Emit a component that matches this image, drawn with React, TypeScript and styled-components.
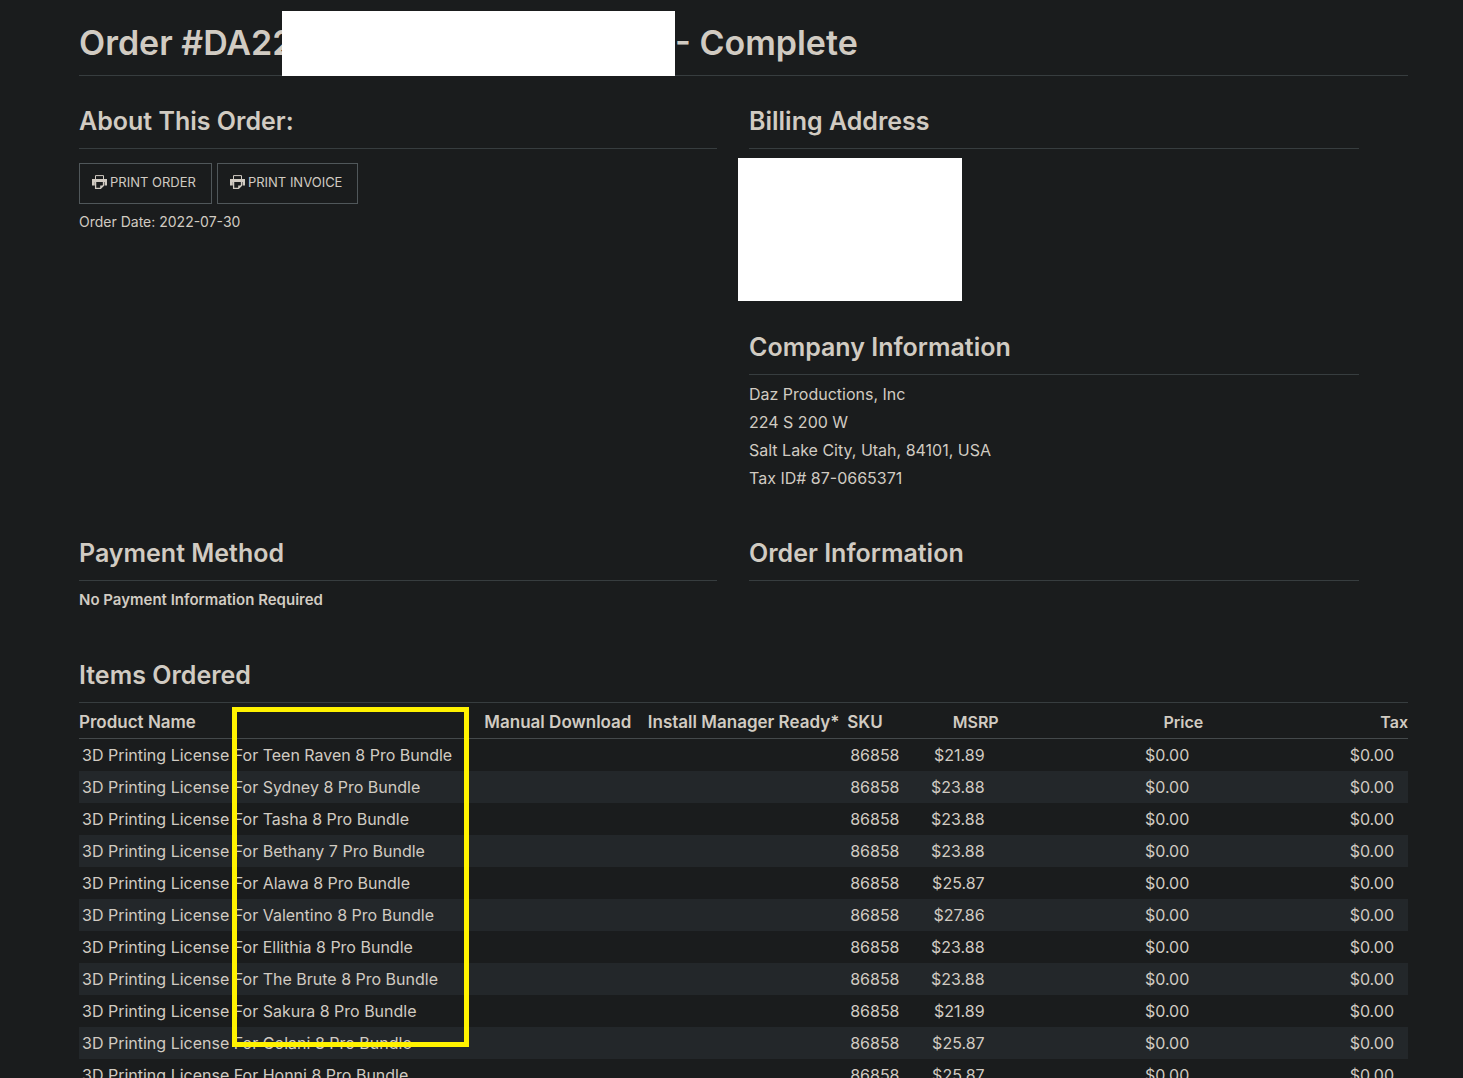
import React from "react";
import styled, { createGlobalStyle } from "styled-components";

const ink = "#d1cbc2";
const rule = "#373d3f";

const GlobalStyle = createGlobalStyle`
  *, *::before, *::after { box-sizing: border-box; }
  body {
    margin: 0;
    background: #1a1c1d;
    color: ${ink};
    font-family: Inter, "Open Sans", sans-serif;
    font-size: 16px;
    line-height: 28px;
  }
`;

const Page = styled.main`
  padding: 11px 55px 0 79px;
`;

const Title = styled.h1`
  display: grid;
  grid-template-columns: 203px 393px auto;
  height: 65px;
  margin: 0;
  border-bottom: 1px solid ${rule};
  font-size: 34px;
  font-weight: 600;
  line-height: 64px;
  white-space: nowrap;
`;

const Redacted = styled.span`
  position: relative;
  height: 65px;
  background: #fff;
`;

const Columns = styled.div`
  display: grid;
  grid-template-columns: 638fr 610fr;
  column-gap: 32px;
  padding-right: 49px;
`;

const Stack = styled.div`
  display: flex;
  flex-direction: column;
`;

const Section = styled.section<{ $space?: number }>`
  margin-top: ${(p) => p.$space ?? 40}px;
`;

const Heading = styled.h2`
  margin: 0;
  padding-bottom: 6px;
  border-bottom: 1px solid ${rule};
  font-size: 25px;
  font-weight: 600;
  line-height: 42px;
`;

const Body = styled.div`
  padding-top: 5px;
`;

const Address = styled.address`
  padding-top: 5px;
  font-style: normal;
`;

const AddressCover = styled.div`
  width: 224px;
  height: 143px;
  margin: 9px 0 0 -11px;
  background: #fff;
`;

const Actions = styled.div`
  display: flex;
  gap: 5px;
  margin: 14px 0 4px;
`;

const PrintButton = styled.button`
  display: flex;
  align-items: center;
  gap: 3px;
  height: 41px;
  padding: 0 15px 4px 12px;
  border: 1px solid #50575a;
  background: transparent;
  color: ${ink};
  font: inherit;
  font-size: 13px;
  text-transform: uppercase;
  cursor: pointer;
`;

const Small = styled.p`
  margin: 0;
  font-size: 14px;
`;

const Notice = styled.p`
  margin: 0;
  font-size: 15px;
  font-weight: 600;
`;

const TableArea = styled.div`
  position: relative;
`;

const Highlight = styled.div`
  position: absolute;
  top: 4px;
  left: 153px;
  width: 237px;
  height: 340px;
  border: 5px solid #fff200;
  pointer-events: none;
`;

const Table = styled.table`
  width: 100%;
  table-layout: fixed;
  border-collapse: separate;
  border-spacing: 0;
  white-space: nowrap;
`;

const Col = styled.col<{ $share: number }>`
  width: ${(p) => p.$share}%;
`;

const HeadCell = styled.th<{ $end?: boolean }>`
  height: 36px;
  padding: 2px 0 0;
  border-bottom: 1px solid #44494b;
  font-size: ${(p) => (p.$end ? 16 : 17)}px;
  font-weight: 600;
  text-align: ${(p) => (p.$end ? "right" : "left")};
`;

const Row = styled.tr`
  &:nth-child(even) { background: #23272a; }
`;

const Cell = styled.td<{ $end?: boolean }>`
  height: 32px;
  padding: 0 ${(p) => (p.$end ? 14 : 0)}px 0 3px;
  text-align: ${(p) => (p.$end ? "right" : "left")};
`;

const PrinterIcon = () => (
  <svg width="15" height="14" viewBox="0 0 15 14" fill="none" stroke="currentColor" aria-hidden="true">
    <path d="M3.5 4V.6h8V4" />
    <path d="M0 4h15v6.5h-2.4V7H2.8v3.5H0z" fill="currentColor" stroke="none" />
    <path d="M3.6 6.6v6.8h4.9l3-3V6.6" strokeWidth="1.3" />
    <path d="M8.2 13.4v-3h3.3z" fill="currentColor" stroke="none" />
  </svg>
);

const items: [string, string][] = [
  ["Teen Raven 8", "$21.89"],
  ["Sydney 8", "$23.88"],
  ["Tasha 8", "$23.88"],
  ["Bethany 7", "$23.88"],
  ["Alawa 8", "$25.87"],
  ["Valentino 8", "$27.86"],
  ["Ellithia 8", "$23.88"],
  ["The Brute 8", "$23.88"],
  ["Sakura 8", "$21.89"],
  ["Golani 8", "$25.87"],
  ["Honni 8", "$25.87"],
];

const shares = [30.5, 12.3, 15, 5, 6.4, 15.4, 15.4];

export default function App() {
  return (
    <>
      <GlobalStyle />
      <Page>
        <Title>
          <span>Order #DA22</span>
          <Redacted />
          <span>- Complete</span>
        </Title>

        <Columns>
          <Section $space={24}>
            <Heading>About This Order:</Heading>
            <Actions>
              <PrintButton type="button"><PrinterIcon />Print Order</PrintButton>
              <PrintButton type="button"><PrinterIcon />Print Invoice</PrintButton>
            </Actions>
            <Small>Order Date: 2022-07-30</Small>
          </Section>
          <Stack>
            <Section $space={24}>
              <Heading>Billing Address</Heading>
              <AddressCover />
            </Section>
            <Section $space={25}>
              <Heading>Company Information</Heading>
              <Address>
                Daz Productions, Inc<br />
                224 S 200 W<br />
                Salt Lake City, Utah, 84101, USA<br />
                Tax ID# 87-0665371
              </Address>
            </Section>
          </Stack>
          <Section>
            <Heading>Payment Method</Heading>
            <Body>
              <Notice>No Payment Information Required</Notice>
            </Body>
          </Section>
          <Section>
            <Heading>Order Information</Heading>
          </Section>
        </Columns>

        <Section>
          <Heading>Items Ordered</Heading>
          <TableArea>
            <Table>
              <colgroup>
                {shares.map((share, i) => <Col key={i} $share={share} />)}
              </colgroup>
              <thead>
                <tr>
                  <HeadCell>Product Name</HeadCell>
                  <HeadCell>Manual Download</HeadCell>
                  <HeadCell>Install Manager Ready*</HeadCell>
                  <HeadCell>SKU</HeadCell>
                  <HeadCell $end>MSRP</HeadCell>
                  <HeadCell $end>Price</HeadCell>
                  <HeadCell $end>Tax</HeadCell>
                </tr>
              </thead>
              <tbody>
                {items.map(([name, msrp]) => (
                  <Row key={name}>
                    <Cell>3D Printing License For {name} Pro Bundle</Cell>
                    <Cell />
                    <Cell />
                    <Cell>86858</Cell>
                    <Cell $end>{msrp}</Cell>
                    <Cell $end>$0.00</Cell>
                    <Cell $end>$0.00</Cell>
                  </Row>
                ))}
              </tbody>
            </Table>
            <Highlight />
          </TableArea>
        </Section>
      </Page>
    </>
  );
}
